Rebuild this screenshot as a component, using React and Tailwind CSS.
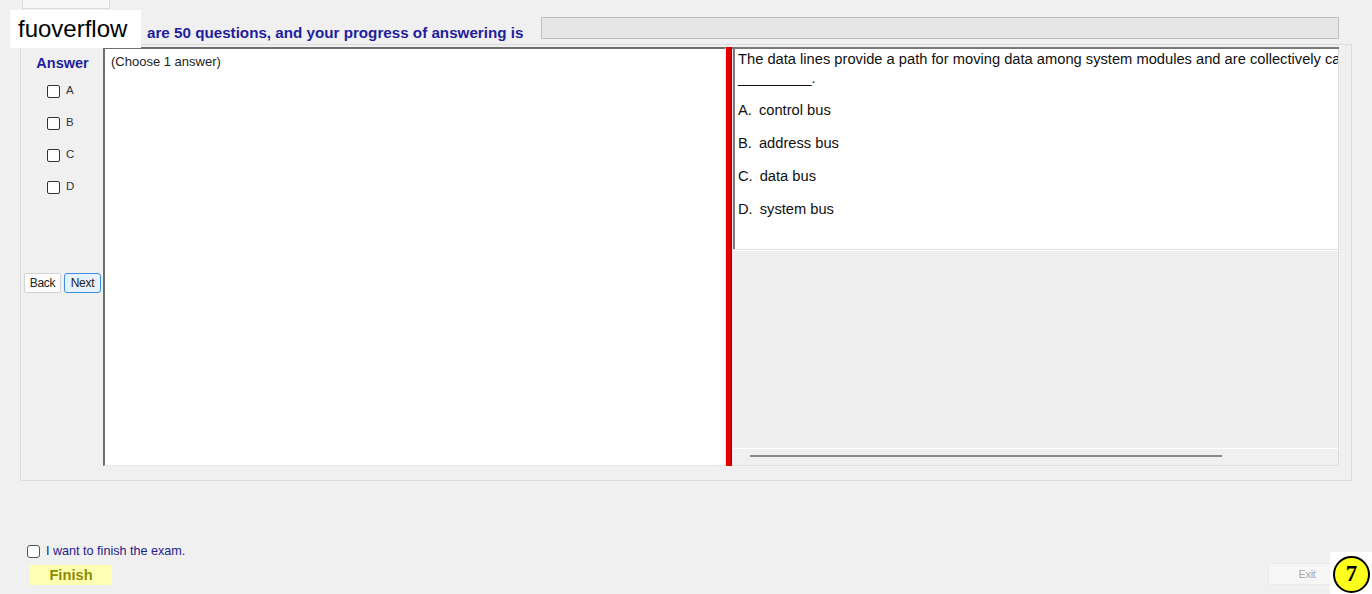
import React from "react";

const Box = () => (
  <div className="w-[13px] h-[13px] rounded-[2px] border border-[#333333] bg-white shrink-0" />
);

export default function App() {
  const opts = [
    ["A.", "control bus", "ml-[7px]"],
    ["B.", "address bus", "ml-[7px]"],
    ["C.", "data bus", "ml-[7px]"],
    ["D.", "system bus", "ml-[7px]"],
  ];
  return (
    <div
      className="relative w-[1372px] h-[594px] overflow-hidden bg-[#f0f0f0] flex flex-col"
      style={{ fontFamily: '"Liberation Sans", Arial, sans-serif' }}
    >
      {/* top tab strip */}
      <div className="h-[10px] flex">
        <div className="ml-[22px] w-[88px] h-[9px] border-x border-b border-[#dcdcdc] bg-[#f7f7f7]" />
      </div>

      {/* header */}
      <div className="h-[34px] flex items-start">
        <div className="w-[147px]" />
        <div className="w-[394px] pt-[14px] text-[15.2px] leading-[17px] font-bold text-[#1f1f9e] whitespace-nowrap">
          are 50 questions, and your progress of answering is
        </div>
        <div className="mt-[7px] w-[798px] h-[22px] bg-[#e6e6e6] border border-[#bdbdbd]" />
      </div>

      {/* main panel */}
      <div className="ml-[20px] w-[1332px] h-[437px] border border-[#dcdcdc] pt-[2px] pl-[1px]">
        <div className="flex h-[419px]">
          {/* left column */}
          <div className="w-[81px] flex flex-col">
            <div className="mt-[8px] text-center text-[14.5px] leading-[16px] font-bold text-[#1f1f9e]">
              Answer
            </div>
            <div className="mt-[4px] flex flex-col">
              {["A", "B", "C", "D"].map((l) => (
                <div key={l} className="h-[32px] flex items-center pl-[25px] gap-[6px]">
                  <Box />
                  <span className="text-[11.5px] leading-[13px] text-[#333333] -mt-[2px]">{l}</span>
                </div>
              ))}
            </div>
            <div className="mt-[70px] pl-[2px] flex gap-[3px]">
              <div className="w-[37px] h-[20px] bg-[#fdfdfd] border border-[#d2d2d2] rounded-[2px] flex items-center justify-center text-[12px] text-[#222222] tracking-[-0.3px]">
                Back
              </div>
              <div className="w-[37px] h-[20px] bg-[#e5f1fb] border border-[#3d8ee0] rounded-[3px] flex items-center justify-center text-[12px] text-[#222222] tracking-[-0.3px]">
                Next
              </div>
            </div>
          </div>

          {/* answer textarea */}
          <div className="w-[623px] h-full bg-white border-l-2 border-t-2 border-[#6e6e6e] border-r border-r-[#e6e6e6] border-b border-b-[#e6e6e6] pl-[6px] pt-[6px]">
            <div className="text-[13px] leading-[14px] text-[#222222]">(Choose 1 answer)</div>
          </div>

          {/* red splitter */}
          <div className="w-[6px] h-full bg-[#e00000] border-r border-[#a00000]" />

          {/* question pane */}
          <div className="w-[607px] h-full flex flex-col border-t-2 border-[#7a7a7a]">
            <div className="h-[200px] ml-[1px] bg-white border-l-2 border-[#7a7a7a] border-r border-r-[#dcdcdc] pl-[3px] pt-[1px] text-[14.7px] text-[#111111] overflow-hidden">
              <div className="leading-[19px] whitespace-nowrap overflow-hidden">
                The data lines provide a path for moving data among system modules and are collectively called
              </div>
              <div className="leading-[18px]">_________.</div>
              {opts.map(([k, v, m]) => (
                <div key={k} className="mt-[13px] leading-[20px] flex">
                  <span>{k}</span>
                  <span className={m}>{v}</span>
                </div>
              ))}
            </div>
            <div className="flex-1 ml-[1px] flex flex-col border-t border-[#dedede] border-r border-r-[#dcdcdc]">
              <div className="flex-1 border-t border-white bg-[#efefef]" />
              <div className="h-[18px] border-t border-white bg-[#f0f0f0] border-b border-b-[#e0e0e0] relative">
                <div className="absolute left-[17px] top-[6px] w-[472px] h-[2px] bg-[#8a8a8a]" />
              </div>
            </div>
          </div>
        </div>
      </div>

      {/* bottom */}
      <div className="mt-[62px] h-[16px] pl-[27px] flex items-center gap-[6px]">
        <div className="w-[13px] h-[13px] rounded-[3px] border border-[#555555] bg-white" />
        <span className="text-[12.6px] leading-[14px] text-[#22228a]">I want to finish the exam.</span>
      </div>
      <div className="mt-[6px] flex justify-between">
        <div className="ml-[30px] w-[82px] h-[20px] bg-[#ffffb4] flex items-center justify-center pt-[1px] text-[14.7px] font-bold text-[#8c8c00]">
          Finish
        </div>
        <div className="-mt-[2px] mr-[41px] w-[63px] h-[22px] bg-[#f6f6f6] border border-[#ebebeb] flex items-center justify-center pl-[15px] text-[11px] text-[#a8a8a8] tracking-[-0.3px]">
          Exit
        </div>
      </div>

      {/* watermark box */}
      <div className="absolute left-[10px] top-[10px] w-[131px] h-[38px] bg-white flex items-center pl-[8px] text-[24px] text-black">
        fuoverflow
      </div>

      {/* badge */}
      <div className="absolute right-0 bottom-0 w-[42px] h-[42px] bg-white" />
      <div
        className="absolute left-[1333px] top-[556px] w-[37px] h-[37px] rounded-full bg-[#ffff1e] border-2 border-black flex items-center justify-center text-[23px] font-bold text-black"
        style={{ fontFamily: '"Liberation Serif", "DejaVu Serif", serif' }}
      >
        7
      </div>
    </div>
  );
}
